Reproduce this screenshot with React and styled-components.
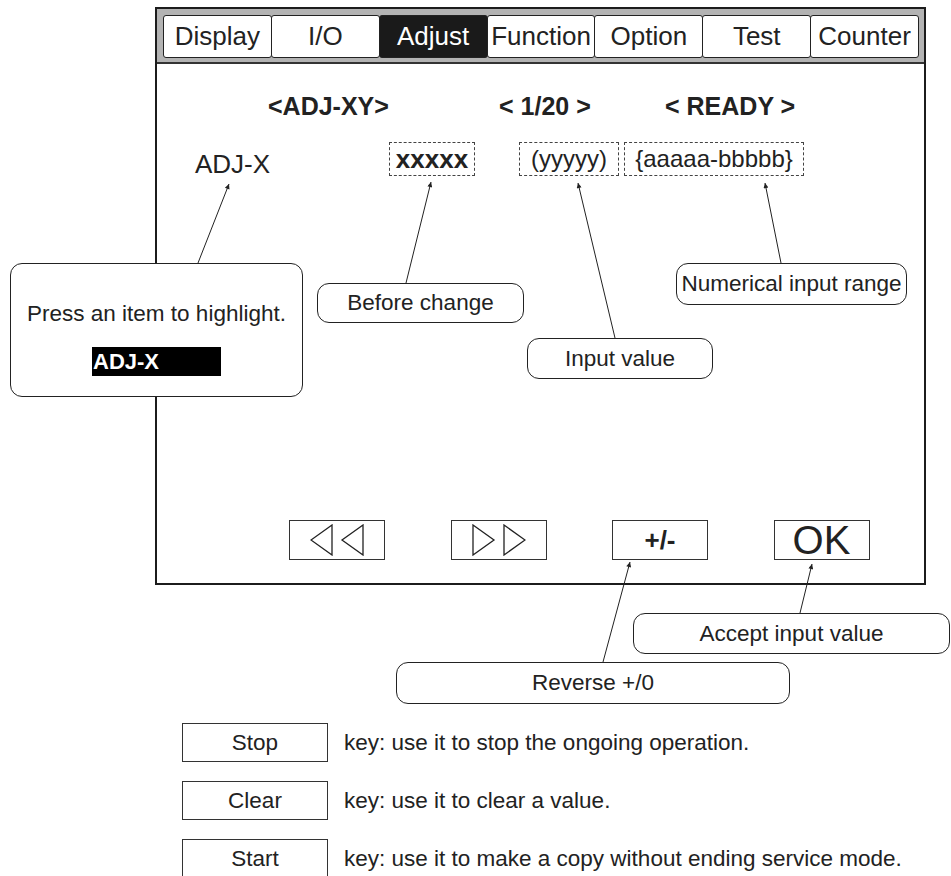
import React from "react";
import styled, { createGlobalStyle } from "styled-components";

const GlobalStyle = createGlobalStyle`
  html, body {
    margin: 0;
    padding: 0;
    background: #fff;
  }
  body {
    font-family: "Liberation Sans", Arial, Helvetica, sans-serif;
    color: #222;
  }
`;

const Canvas = styled.div`
  position: relative;
  width: 951px;
  height: 876px;
  overflow: hidden;
  background: #fff;
`;

/* ---- the touch panel screen ---- */

const Screen = styled.div`
  box-sizing: border-box;
  margin: 7px 0 0 155px;
  width: 771px;
  height: 578px;
  border: 2px solid #1c1c1c;
  display: flex;
  flex-direction: column;
`;

const TabBar = styled.div`
  display: flex;
  background: #b3b3b3;
  padding: 6px 5px 4px 6px;
  border-bottom: 2px solid #333;
`;

const Tab = styled.div`
  flex: 1;
  box-sizing: border-box;
  height: 43px;
  margin-left: -1px;
  border: 1.5px solid #222;
  border-radius: 3px;
  display: flex;
  align-items: center;
  justify-content: center;
  font-size: 26px;
  white-space: nowrap;
  background: ${(p) => (p.$active ? "#1a1a1a" : "#fff")};
  color: ${(p) => (p.$active ? "#fff" : "#222")};

  &:first-child {
    margin-left: 0;
  }
`;

const ScreenBody = styled.div`
  flex: 1;
  display: flex;
  flex-direction: column;
  padding: 27px 0 23px;
`;

const HeaderRow = styled.div`
  display: flex;
  height: 30px;
  padding-left: 111px;
  font-size: 25px;
  font-weight: bold;
  line-height: 30px;
`;

const HeaderCell = styled.div`
  width: ${(p) => p.$w}px;
  margin-left: ${(p) => p.$gap || 0}px;
  white-space: pre;
`;

const ValueRow = styled.div`
  display: flex;
  align-items: flex-start;
  height: 34px;
  margin-top: 21px;
  padding-left: 38px;
`;

const ItemName = styled.div`
  width: 194px;
  padding-top: 5px;
  font-size: 26px;
  line-height: 34px;
`;

const ValueBox = styled.div`
  box-sizing: border-box;
  width: ${(p) => p.$w}px;
  height: 34px;
  margin-left: ${(p) => p.$gap || 0}px;
  border: 1.5px dashed #444;
  display: flex;
  align-items: center;
  justify-content: center;
  white-space: nowrap;
  font-size: ${(p) => (p.$bold ? 26 : 24)}px;
  font-weight: ${(p) => (p.$bold ? "bold" : "normal")};
`;

const ButtonRow = styled.div`
  margin-top: auto;
  display: flex;
  gap: 65.5px;
  padding-left: 132px;
`;

const PanelButton = styled.div`
  box-sizing: border-box;
  width: 96px;
  height: 40px;
  border: 1.5px solid #333;
  display: flex;
  align-items: center;
  justify-content: center;
  font-size: ${(p) => (p.$big ? 40 : 26)}px;
  font-weight: ${(p) => (p.$big ? "normal" : "bold")};
  line-height: ${(p) => (p.$big ? "46px" : "40px")};
`;

/* ---- key legend under the screen ---- */

const Legend = styled.div`
  margin-top: 138px;
  padding-left: 182px;
  display: flex;
  flex-direction: column;
  gap: 19px;
`;

const LegendRow = styled.div`
  display: flex;
  align-items: center;
  gap: 16px;
  font-size: 22.5px;
  white-space: nowrap;
`;

const KeyBox = styled.div`
  box-sizing: border-box;
  width: 146px;
  height: 39px;
  border: 1.5px solid #333;
  display: flex;
  align-items: center;
  justify-content: center;
`;

/* ---- annotations drawn over the diagram ---- */

const Leaders = styled.svg`
  position: absolute;
  left: 0;
  top: 0;
  pointer-events: none;
`;

const Callout = styled.div`
  position: absolute;
  left: ${(p) => p.$x}px;
  top: ${(p) => p.$y}px;
  width: ${(p) => p.$w}px;
  height: ${(p) => p.$h}px;
  box-sizing: border-box;
  border: 1.5px solid #222;
  border-radius: 12px;
  background: #fff;
  display: flex;
  flex-direction: column;
  align-items: center;
  justify-content: center;
  font-size: 22.5px;
  white-space: nowrap;
`;

const HintCallout = styled(Callout)`
  justify-content: flex-start;
  padding-top: 36px;
  gap: 19px;
`;

const HintText = styled.div`
  line-height: 28px;
`;

const Highlighted = styled.div`
  box-sizing: border-box;
  width: 129px;
  height: 29px;
  padding-left: 1px;
  background: #000;
  color: #fff;
  font-weight: bold;
  font-size: 22px;
  line-height: 29px;
`;

const tabs = ["Display", "I/O", "Adjust", "Function", "Option", "Test", "Counter"];

const leaderLines = [
  [198, 263, 229, 184],
  [406, 283, 431, 182],
  [615, 338, 578, 183],
  [781, 263, 765, 183],
  [603, 662, 630, 562],
  [800, 613, 812, 564],
];

const callouts = [
  { x: 317, y: 283, w: 207, h: 40, text: "Before change" },
  { x: 527, y: 338, w: 186, h: 41, text: "Input value" },
  { x: 676, y: 263, w: 231, h: 42, text: "Numerical input range" },
  { x: 633, y: 613, w: 317, h: 41, text: "Accept input value" },
  { x: 396, y: 662, w: 394, h: 42, text: "Reverse +/0" },
];

const keys = [
  ["Stop", "key: use it to stop the ongoing operation."],
  ["Clear", "key: use it to clear a value."],
  ["Start", "key: use it to make a copy without ending service mode."],
];

function Arrows({ dir }) {
  const pts =
    dir === "left"
      ? ["21,0 0,15 21,30", "52,0 31,15 52,30"]
      : ["0,0 21,15 0,30", "31,0 52,15 31,30"];
  return (
    <svg width="54" height="32" viewBox="-1 -1 54 32">
      {pts.map((p) => (
        <polygon key={p} points={p} fill="none" stroke="#222" strokeWidth="1.3" />
      ))}
    </svg>
  );
}

export default function App() {
  return (
    <>
      <GlobalStyle />
      <Canvas>
        <Screen>
          <TabBar>
            {tabs.map((t) => (
              <Tab key={t} $active={t === "Adjust"}>
                {t}
              </Tab>
            ))}
          </TabBar>
          <ScreenBody>
            <HeaderRow>
              <HeaderCell $w={120}>{"<ADJ-XY>"}</HeaderCell>
              <HeaderCell $w={96} $gap={111}>{"< 1/20 >"}</HeaderCell>
              <HeaderCell $w={140} $gap={70}>{"< READY >"}</HeaderCell>
            </HeaderRow>
            <ValueRow>
              <ItemName>ADJ-X</ItemName>
              <ValueBox $w={86} $bold>xxxxx</ValueBox>
              <ValueBox $w={100} $gap={44}>(yyyyy)</ValueBox>
              <ValueBox $w={180} $gap={5}>{"{aaaaa-bbbbb}"}</ValueBox>
            </ValueRow>
            <ButtonRow>
              <PanelButton>
                <Arrows dir="left" />
              </PanelButton>
              <PanelButton>
                <Arrows dir="right" />
              </PanelButton>
              <PanelButton>+/-</PanelButton>
              <PanelButton $big>OK</PanelButton>
            </ButtonRow>
          </ScreenBody>
        </Screen>

        <Legend>
          {keys.map(([k, desc]) => (
            <LegendRow key={k}>
              <KeyBox>{k}</KeyBox>
              <span>{desc}</span>
            </LegendRow>
          ))}
        </Legend>

        <Leaders width="951" height="876">
          <defs>
            <marker
              id="tip"
              viewBox="0 0 10 10"
              refX="10"
              refY="5"
              markerWidth="9"
              markerHeight="5"
              markerUnits="userSpaceOnUse"
              orient="auto"
            >
              <path d="M0,0 L10,5 L0,10 z" fill="#222" />
            </marker>
          </defs>
          {leaderLines.map(([x1, y1, x2, y2]) => (
            <line
              key={`${x1}-${y1}`}
              x1={x1}
              y1={y1}
              x2={x2}
              y2={y2}
              stroke="#222"
              strokeWidth="1"
              markerEnd="url(#tip)"
            />
          ))}
        </Leaders>

        <HintCallout $x={10} $y={263} $w={293} $h={134}>
          <HintText>Press an item to highlight.</HintText>
          <Highlighted>ADJ-X</Highlighted>
        </HintCallout>

        {callouts.map((c) => (
          <Callout key={c.text} $x={c.x} $y={c.y} $w={c.w} $h={c.h}>
            {c.text}
          </Callout>
        ))}
      </Canvas>
    </>
  );
}
